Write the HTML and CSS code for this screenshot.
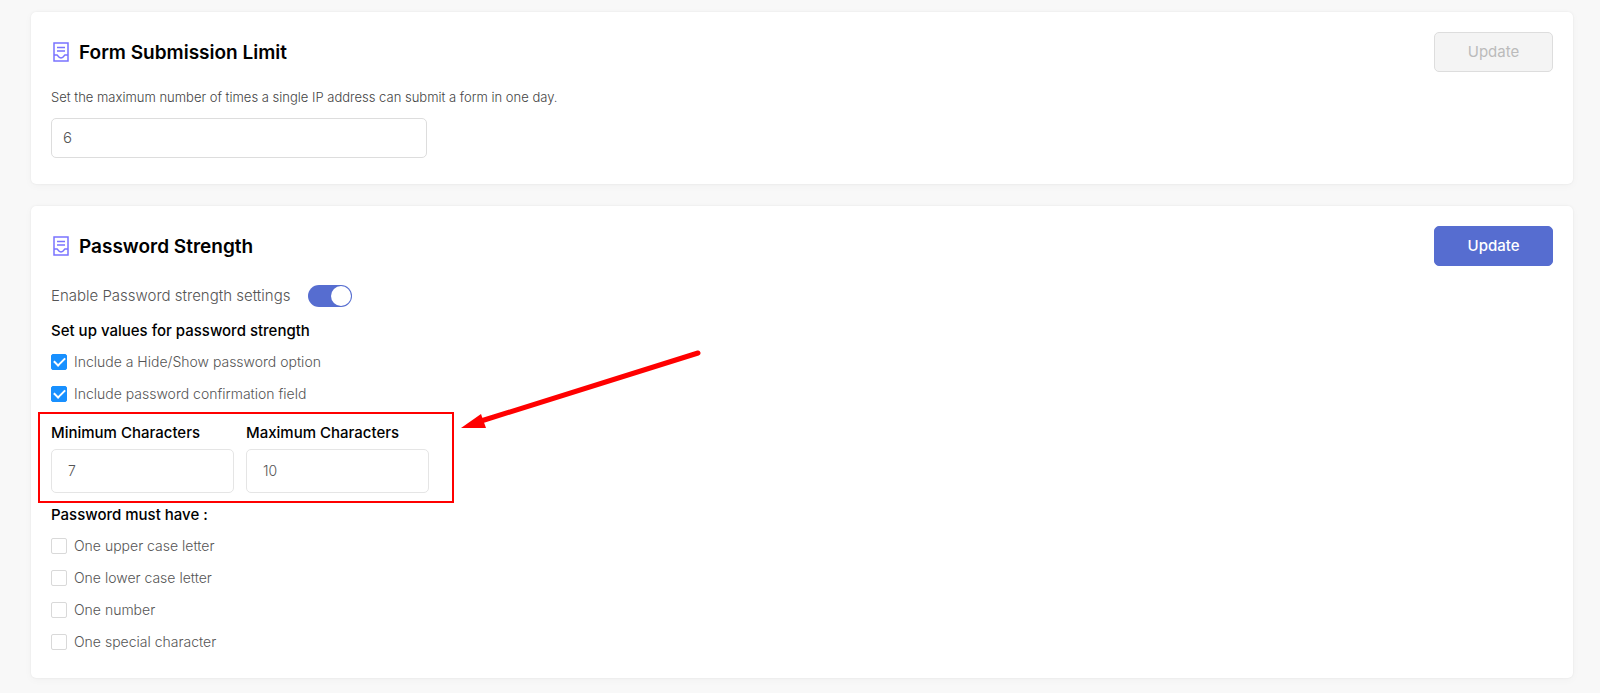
FILE: index.html
```html
<!DOCTYPE html>
<html lang="en">
<head>
<meta charset="UTF-8" />
<meta name="viewport" content="width=device-width, initial-scale=1" />
<title>Form Settings</title>
<link rel="stylesheet" href="styles.css">
</head>
<body>

  <!-- Submission limit -->
  <form class="card">
    <div class="card-header">
      <svg class="card-icon" viewBox="0 0 16 20" aria-hidden="true">
        <path d="M1 1h14v18H1z" />
        <path d="M4 5.500h8M4 9h8" />
        <path d="M1 13h3c1 0 1 3 4 3s3-3 4-3h3" />
      </svg>
      <h2>Form Submission Limit</h2>
      <button type="submit" class="btn" disabled>Update</button>
    </div>
    <label class="limit-label" for="submitLimit">Set the maximum number of times a single IP address can submit a form in one day.</label>
    <input type="text" inputmode="numeric" id="submitLimit" class="limit-input" value="6" />
  </form>

  <!-- Password strength -->
  <form class="card">
    <div class="card-header">
      <svg class="card-icon" viewBox="0 0 16 20" aria-hidden="true">
        <path d="M1 1h14v18H1z" />
        <path d="M4 5.500h8M4 9h8" />
        <path d="M1 13h3c1 0 1 3 4 3s3-3 4-3h3" />
      </svg>
      <h2>Password Strength</h2>
      <button type="submit" class="btn">Update</button>
    </div>

    <div class="toggle-row">
      <label for="enableStrength">Enable Password strength settings</label>
      <input type="checkbox" id="enableStrength" class="toggle" checked />
    </div>

    <h3>Set up values for password strength</h3>
    <div class="check-list">
      <label><input type="checkbox" checked /> Include a Hide/Show password option</label>
      <label><input type="checkbox" checked /> Include password confirmation field</label>
    </div>

    <div class="char-limits">
      <div class="field">
        <label for="minChars">Minimum Characters</label>
        <input type="text" inputmode="numeric" id="minChars" value="7" />
      </div>
      <div class="field">
        <label for="maxChars">Maximum Characters</label>
        <input type="text" inputmode="numeric" id="maxChars" value="10" />
      </div>
      <svg class="arrow" viewBox="0 0 240 78" aria-hidden="true">
        <path class="arrow-line" d="M237 3L20 71" />
        <path class="arrow-head" d="M0 78L20 64L25 78z" />
      </svg>
    </div>

    <h3>Password must have :</h3>
    <div class="check-list">
      <label><input type="checkbox" /> One upper case letter</label>
      <label><input type="checkbox" /> One lower case letter</label>
      <label><input type="checkbox" /> One number</label>
      <label><input type="checkbox" /> One special character</label>
    </div>
  </form>

</body>
</html>
```

FILE: styles.css
```css
* {
  box-sizing: border-box;
}
body {
  margin: 0;
  padding: 12px 27px 15px 31px;
  background: #f8f8f8;
  color: #555;
  font-family: Inter, "Open Sans", sans-serif;
  font-size: 15px;
  font-weight: 300;
  line-height: 22px;
}
.card {
  margin-bottom: 22px;
  padding: 20px;
  background: #fff;
  border-radius: 5px;
  box-shadow: 0 0 2px rgba(0,0,0,0.08), 0 2px 8px rgba(0,0,0,0.03);
}
.card:last-child {
  margin-bottom: 0;
}
.card-header {
  display: flex;
  align-items: center;
}
.card-icon {
  width: 16px;
  height: 20px;
  margin: 0 10px 0 2px;
  fill: none;
  stroke: #7a73ff;
  stroke-width: 1.5;
}
h2 {
  margin: 0;
  padding-top: 1px;
  flex: 1;
  color: #000;
  font-size: 19px;
  font-weight: 600;
}
h3 {
  margin: 0;
  padding-bottom: 4px;
  color: #000;
  font-size: 15px;
  font-weight: 500;
  line-height: 22px;
}
.btn {
  width: 119px;
  height: 40px;
  padding-bottom: 3px;
  border: 1px solid #566dd0;
  border-radius: 5px;
  background: #566dd0;
  color: #fff;
  font: 500 15px Inter, "Open Sans", sans-serif;
  cursor: pointer;
}
.btn:disabled {
  border-color: #ddd;
  background: #f4f4f4;
  color: #bbb;
  font-weight: 400;
  cursor: not-allowed;
}
input[type="text"] {
  display: block;
  padding: 0 11px 2px;
  border: 1px solid #ddd;
  border-radius: 5px;
  background: #fff;
  color: #555;
  font: 300 15px Inter, "Open Sans", sans-serif;
}
.limit-label {
  display: block;
  padding: 14px 0 10px;
  color: #444;
  font-size: 13px;
}
.limit-input {
  width: 376px;
  max-width: 100%;
  height: 40px;
  margin-bottom: 6px;
}
.toggle-row {
  display: flex;
  align-items: center;
  gap: 18px;
  padding: 19px 0 13px;
}
.toggle {
  appearance: none;
  display: flex;
  justify-content: flex-end;
  width: 44px;
  height: 22px;
  margin: 0;
  padding: 1px;
  border-radius: 11px;
  background: #566dd0;
}
.toggle::before {
  content: "";
  width: 20px;
  height: 20px;
  border-radius: 50%;
  background: #fff;
}
.toggle:not(:checked) {
  justify-content: flex-start;
  background: #bbb;
}
.check-list label {
  display: flex;
  align-items: center;
  gap: 7px;
  height: 32px;
  font-size: 14px;
}
.check-list input {
  appearance: none;
  width: 16px;
  height: 16px;
  margin: 0;
  border: 1px solid #d9d9d9;
  border-radius: 2px;
  background: #fff;
}
.check-list input:checked {
  display: flex;
  align-items: center;
  justify-content: center;
  border-color: #1890ff;
  background: #1890ff;
}
.check-list input:checked::before {
  content: "";
  width: 9px;
  height: 5px;
  margin-bottom: 3px;
  border: solid #fff;
  border-width: 0 0 2px 2px;
  transform: rotate(-45deg);
}
.char-limits {
  position: relative;
  display: flex;
  gap: 12px;
  width: fit-content;
  padding: 12px 0 11px;
}
/* highlight frame around the two inputs */
.char-limits::before {
  content: "";
  position: absolute;
  inset: 2px -25px 1px -13px;
  border: 2px solid #f00;
  pointer-events: none;
}
.field label {
  display: block;
  padding-bottom: 5px;
  color: #000;
  font-weight: 500;
}
.field input[type="text"] {
  width: 183px;
  height: 44px;
  padding: 0 16px 2px;
  border-color: #e5e5e5;
  font-size: 14px;
}
.arrow {
  position: absolute;
  top: -60px;
  left: 410px;
  width: 240px;
  height: 78px;
}
.arrow-line {
  stroke: #f00;
  stroke-width: 5;
  stroke-linecap: round;
}
.arrow-head {
  fill: #f00;
}
```
